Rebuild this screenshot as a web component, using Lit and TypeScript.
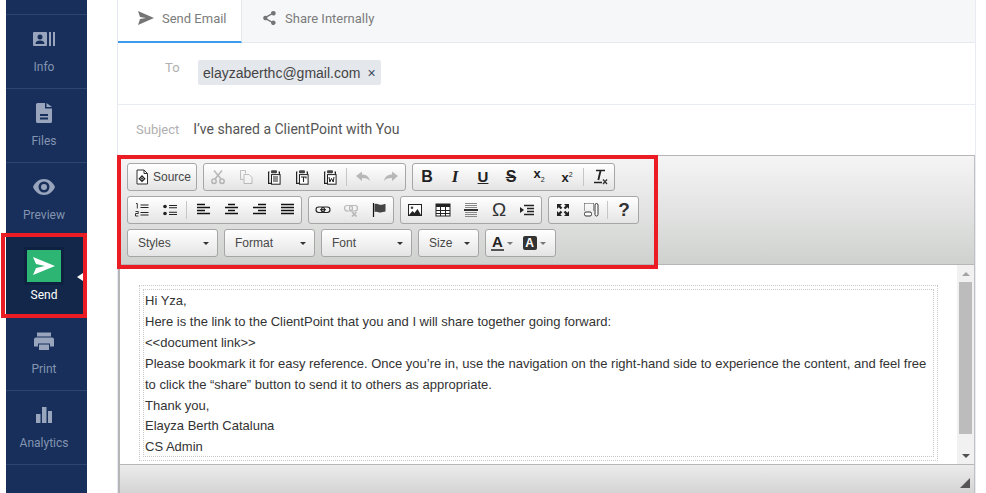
import { LitElement, html, css, svg } from "lit";
import { customElement } from "lit/decorators.js";

const ic = (body: unknown, dim = false) => html`<svg class="ic ${dim ? "dim" : ""}" viewBox="0 0 16 16">${body}</svg>`;
const clip = (inner: unknown) => svg`
  <path d="M3.5 3H2.6v11.4h3" fill="none" stroke="#222" stroke-width="1.2"/>
  <path d="M12.5 3h.9v3" fill="none" stroke="#222" stroke-width="1.2"/>
  <rect x="5" y="1.2" width="6" height="3" rx="1" fill="#444"/>
  <rect x="5.5" y="5.6" width="8.6" height="9.6" fill="#fff" stroke="#222"/>${inner}`;

const I = {
  source: ic(svg`<path d="M3 1h7l3.5 3.5V15H3z" fill="#fff" stroke="#333"/><path d="M10 1v3.5h3.5" fill="none" stroke="#333"/><path d="M8 7 5.300 9.700 8 12.400l2.700-2.700z" fill="#fff" stroke="#222" stroke-width="1.300"/><circle cx="8" cy="9.700" r=".9" fill="#222"/>`),
  cut: ic(svg`<path d="M4 1.5 11 10M12 1.5 5 10" stroke="#333" stroke-width="1.6"/><circle cx="4" cy="12.3" r="2.2" fill="none" stroke="#333" stroke-width="1.5"/><circle cx="12" cy="12.3" r="2.2" fill="none" stroke="#333" stroke-width="1.5"/>`, true),
  copy: ic(svg`<path d="M2.5 1.5h5v3M2.5 1.5v9h3" fill="none" stroke="#444"/><path d="M6 5.5h5l3 3v6H6z" fill="#fff" stroke="#444"/>`, true),
  paste: ic(clip(svg`<path d="M7 8h5M7 10h5M7 12h5" stroke="#222"/>`)),
  pastet: ic(clip(svg`<path d="M7 8h5v1.4M9.5 8v5" fill="none" stroke="#222" stroke-width="1.1"/>`)),
  pastew: ic(clip(svg`<path d="M7 8l.8 5 1.7-3.6 1.7 3.6.8-5" fill="none" stroke="#222"/>`)),
  undo: ic(svg`<path d="M1 7 7 2.5v3c4 0 7 2 8 6.5-2-2.4-4.400-3-8-3v3z" fill="#333"/>`, true),
  redo: ic(svg`<path d="M15 7 9 2.500v3c-4 0-7 2-8 6.500 2-2.400 4.400-3 8-3v3z" fill="#333"/>`, true),
  ol: ic(svg`<path d="M6.500 3h8M6.500 5.500h8M6.500 10.500h8M6.500 13h8" stroke="#222" stroke-width="1.100"/><path d="M2 1.500h1.300v5M1.500 9.500h2.800v2h-2.800v2.500h2.800" fill="none" stroke="#222" stroke-width=".9"/>`),
  ul: ic(svg`<path d="M7 3.500h8M7 5.800h8M7 10.200h8M7 12.500h8" stroke="#222" stroke-width="1.100"/><circle cx="3" cy="4.500" r="1.800" fill="#222"/><circle cx="3" cy="11.500" r="1.800" fill="#222"/>`),
  left: ic(svg`<path d="M2 2.500h8M2 5.500h13M2 8.500h8M2 11.500h13" stroke="#111" stroke-width="1.700"/>`),
  center: ic(svg`<path d="M5 2.500h7M2 5.500h13M5 8.500h7M2 11.500h13" stroke="#111" stroke-width="1.700"/>`),
  right: ic(svg`<path d="M7 2.500h8M2 5.500h13M7 8.500h8M2 11.500h13" stroke="#111" stroke-width="1.700"/>`),
  justify: ic(svg`<path d="M2 2.500h13M2 5.500h13M2 8.500h13M2 11.500h13" stroke="#111" stroke-width="1.700"/>`),
  link: ic(svg`<rect x="1" y="5" width="8.500" height="5.500" rx="2.700" fill="none" stroke="#222" stroke-width="1.100"/><rect x="6.500" y="5" width="8.500" height="5.500" rx="2.700" fill="none" stroke="#222" stroke-width="1.100"/><path d="M5 7.700h6" stroke="#222" stroke-width="1.100"/>`),
  unlink: ic(svg`<rect x="1.500" y="3.500" width="8" height="5.500" rx="2.700" fill="none" stroke="#333" stroke-width="1.200"/><rect x="6.500" y="3.500" width="8" height="5.500" rx="2.700" fill="none" stroke="#333" stroke-width="1.200"/><path d="M9 10l4.500 4.500M13.500 10 9 14.500" stroke="#333" stroke-width="1.500"/>`, true),
  flag: ic(svg`<path d="M2.500 1v14" stroke="#111" stroke-width="1.200"/><path d="M3.500 2c3-1 4 .8 6 .8 2 0 3.500-.8 5-.8v7.500c-2 0-3 1-5 1-2 0-3-1.500-6-.5z" fill="#444"/>`),
  image: ic(svg`<rect x="1.500" y="2.500" width="13" height="11" fill="#fff" stroke="#222"/><path d="M2 13l3.500-4 2 2 3-4 3.500 6z" fill="#222"/><circle cx="5" cy="5.800" r="1.300" fill="#444"/>`),
  table: ic(svg`<rect x="1" y="2" width="14" height="12" fill="#fff" stroke="#222"/><rect x="1" y="2" width="14" height="3" fill="#222"/><path d="M1 8.500h14M1 11.500h14M5.500 5v9M10.500 5v9" stroke="#222"/>`),
  hr: ic(svg`<path d="M2 1.500h12M2 3.500h12M2 5.500h12M2 10.500h12M2 12.500h12M2 14.500h12" stroke="#888"/><path d="M1 8h14" stroke="#111" stroke-width="1.700"/>`),
  indent: ic(svg`<path d="M5 3.500h10M8 6.500h7M8 9.500h7M5 12.500h10" stroke="#222" stroke-width="1.600"/><path d="M1 5l4 3-4 3z" fill="#222"/>`),
  max: ic(svg`<path d="M2 2h5L5.300 3.700l2 2-1.600 1.600-2-2L2 7zM14 2v5l-1.700-1.700-2 2-1.600-1.600 2-2L9 2zM2 14V9l1.700 1.700 2-2 1.600 1.600-2 2L7 14zM14 14H9l1.700-1.700-2-2 1.600-1.600 2 2L14 9z" fill="#222"/>`),
  blocks: ic(svg`<path d="M1.500 1.500h9M1.500 1.500v8M10.500 1.500v8" fill="none" stroke="#444" stroke-dasharray="1 1"/><rect x="1.500" y="10" width="7" height="4" rx="1.500" fill="#fff" stroke="#333"/><rect x="12" y="1.500" width="3" height="12.500" rx="1.500" fill="#fff" stroke="#333"/>`),
  remove: ic(svg`<path d="M4 1.500h9" stroke="#222" stroke-width="1.500"/><path d="M8.500 2 6.300 11" stroke="#222" stroke-width="1.800"/><path d="M2 13.500h8" stroke="#222" stroke-width="1.500"/><path d="M11 10.500l4 4.500M15 10.500l-4 4.500" stroke="#333" stroke-width="1.300"/>`),
};

type Item = unknown | "|";
const rowA: Item[][] = [
  [I.cut, I.copy, I.paste, I.pastet, I.pastew, "|", I.undo, I.redo],
  [
    html`<b class="g b">B</b>`,
    html`<i class="g i">I</i>`,
    html`<span class="g u">U</span>`,
    html`<span class="g s">S</span>`,
    html`<span class="g x">x<sub>2</sub></span>`,
    html`<span class="g x">x<sup>2</sup></span>`,
    "|",
    I.remove,
  ],
];
const rowB: Item[][] = [
  [I.ol, I.ul, "|", I.left, I.center, I.right, I.justify],
  [I.link, I.unlink, I.flag],
  [I.image, I.table, I.hr, html`<span class="g om">Ω</span>`, I.indent],
  [I.max, I.blocks, "|", html`<span class="g q">?</span>`],
];

const paragraphs = [
  "Hi Yza,",
  "Here is the link to the ClientPoint that you and I will share together going forward:",
  "<<document link>>",
  "Please bookmark it for easy reference. Once you’re in, use the navigation on the right-hand side to experience the content, and feel free to click the “share” button to send it to others as appropriate.",
  "Thank you,",
  "Elayza Berth Cataluna",
  "CS Admin",
];

const nav = [
  { label: "Info", icon: svg`<path fill-rule="evenodd" d="M3 5h12a1 1 0 0 1 1 1v12a1 1 0 0 1-1 1H3a1 1 0 0 1-1-1V6a1 1 0 0 1 1-1zm6 2.500a2.500 2.500 0 1 0 0 5 2.500 2.500 0 0 0 0-5zM4.500 17h9c0-2.300-1.800-3.400-4.500-3.400S4.500 14.700 4.500 17z"/><rect x="18" y="5" width="2" height="14"/><rect x="22" y="5" width="2" height="14"/>` },
  { label: "Files", icon: svg`<path fill-rule="evenodd" d="M6.500 2H14v5.500h7v13a1.500 1.500 0 0 1-1.500 1.500h-13A1.500 1.500 0 0 1 5 20.500v-17A1.500 1.500 0 0 1 6.500 2zM9 13v2h8v-2zm0 3.500v2h8v-2z"/><path d="M15.500 2 21 6h-5.500z"/>` },
  { label: "Preview", icon: svg`<path fill-rule="evenodd" d="M13 4c5 0 9 3.500 11 8-2 4.500-6 8-11 8S4 16.500 2 12c2-4.500 6-8 11-8zm0 2.500a5.500 5.500 0 1 0 0 11 5.500 5.500 0 0 0 0-11zm0 2.500a3 3 0 1 1 0 6 3 3 0 0 1 0-6z"/>` },
];
const nav2 = [
  { label: "Print", icon: svg`<path fill-rule="evenodd" d="M6 3.500h14v4H6zM5 8.500h16a2 2 0 0 1 2 2v7h-4v-3H7v3H3v-7a2 2 0 0 1 2-2zM8 15.500h10V21H8z"/>` },
  { label: "Analytics", icon: svg`<rect x="5" y="11" width="4.500" height="9"/><rect x="11" y="4" width="4.500" height="16"/><rect x="17" y="8" width="4" height="12"/>` },
];

@customElement("app-root")
export class AppRoot extends LitElement {
  static styles = css`
    :host { display: block; width: 986px; height: 493px; overflow: hidden; background: #fff; position: relative; }
    .page { display: flex; height: 493px; font-family: Roboto, sans-serif; }
    .side { width: 81px; margin-left: 6px; background: #172f5a; flex: none; display: flex; flex-direction: column; }
    .side .top { height: 14px; border-bottom: 1px solid #2d4570; flex: none; }
    .nav { height: 74px; flex: none; box-sizing: border-box; border-bottom: 1px solid #2d4570; display: flex; flex-direction: column; align-items: center; padding: 12px 5px 0 0; color: #8494b1; font-size: 12px; }
    .nav svg { width: 26px; height: 24px; fill: #98a5bd; margin-bottom: 9px; flex: none; }
    .nav span { line-height: 14px; }
    .send { height: 80px; flex: none; background: #12274a; position: relative; display: flex; flex-direction: column; align-items: center; padding: 10px 5px 0 0; box-sizing: border-box; color: #fff; font-size: 12px; }
    .send span { line-height: 14px; }
    .send .box { width: 34px; height: 32px; background: #2db673; border: 3px solid #0f2140; border-radius: 3px; display: flex; align-items: center; justify-content: center; margin-bottom: 3px; }
    .send svg { width: 22px; height: 18px; }
    .send .tip { position: absolute; right: 4px; top: 36px; width: 0; height: 0; border: 4px solid transparent; border-left-width: 0; border-right: 6px solid #fff; }
    .main { width: 859px; margin-left: 30px; flex: none; display: flex; flex-direction: column; border-left: 1px solid #e4e8f0; box-sizing: border-box; border-right: 1px solid #e8ebf2; }
    .tabs { display: flex; height: 43px; flex: none; background: #f6f7f9; border-bottom: 1px solid #e6e9f0; box-sizing: border-box; color: #7c7c7c; font-size: 13px; }
    .tab { display: flex; align-items: center; gap: 7px; padding-bottom: 6px; box-sizing: border-box; }
    .tab.on { width: 124px; background: #fff; border-bottom: 2px solid #3d9be9; margin-bottom: -1px; padding-left: 20px; padding-bottom: 5px; border-right: 1px solid #e6e9f0; }
    .tab.off { padding-left: 19px; }
    .tab svg { width: 17px; height: 16px; fill: #757575; }
    .row { display: flex; flex: none; border-bottom: 1px solid #e9ecf2; box-sizing: border-box; }
    .to { height: 62px; padding: 18px 0 0 47px; gap: 19px; }
    .lab { color: #b0b0b0; font-size: 13px; line-height: 14px; }
    .to .lab { width: 14px; }
    .chip { height: 25px; margin-top: -1px; background: #e4e7ec; border-radius: 2px; display: flex; align-items: center; padding: 0 5px; gap: 7px; color: #444; font: 14px "Liberation Sans", sans-serif; }
    .chip i { font-style: normal; font-size: 14px; color: #3c4b5e; }
    .subj { height: 50px; border-bottom: none; padding: 16px 0 0 18px; gap: 14px; color: #555; font-size: 14px; line-height: 16px; }
    .subj .lab { margin-top: 2px; }
    .ed { flex: 1; min-height: 0; border: 1px solid #b6b6b6; border-left-width: 2px; border-bottom: none; border-right-color: #c0c0c0; display: flex; flex-direction: column; font-family: "Liberation Sans", Arial, sans-serif; }
    .bar { height: 109px; flex: none; box-sizing: border-box; padding: 7px 0 0 7px; background: linear-gradient(#f5f5f5, #cfd1cf); border-bottom: 1px solid #b6b6b6; display: flex; flex-direction: column; gap: 5px; }
    .tr { display: flex; gap: 6px; height: 28px; }
    .grp { display: flex; align-items: center; height: 28px; box-sizing: border-box; border: 1px solid #a6a6a6; border-radius: 3px; background: linear-gradient(#fff, #e4e4e4); color: #474747; font-size: 12px; }
    .btn { width: 28px; height: 26px; display: flex; align-items: center; justify-content: center; flex: none; color: #222; }
    .sep { width: 5px; flex: none; display: flex; justify-content: center; }
    .sep::before { content: ""; width: 1px; height: 18px; background: #c6c6c6; }
    .ic { width: 16px; height: 16px; display: block; }
    .dim { opacity: .3; }
    .g { font-family: "Liberation Sans", sans-serif; line-height: 16px; color: #222; font-size: 15px; }
    .b { font-weight: 700; font-size: 16px; }
    .i { font-family: "Liberation Serif", serif; font-weight: 700; font-size: 17px; }
    .u { text-decoration: underline; font-weight: 700; }
    .s { text-decoration: line-through; font-weight: 700; font-size: 16px; }
    .x { font-weight: 700; font-size: 13px; }
    .x sub, .x sup { font-size: 7px; font-weight: 400; }
    .om { font-size: 19px; font-weight: 400; color: #333; }
    .q { font-weight: 700; font-size: 19px; color: #333; }
    .src { width: 70px; padding-left: 6px; gap: 3px; }
    .combo { justify-content: space-between; padding: 0 8px 0 10px; }
    .caret { width: 0; height: 0; border: 3px solid transparent; border-top-color: #333; border-bottom-width: 0; }
    .w91 { width: 91px; } .w61 { width: 61px; } .w71 { width: 71px; }
    .col { width: 32px; display: flex; align-items: center; justify-content: center; gap: 3px; }
    .col .caret { border-top-color: #777; }
    .tA { font: 700 15px "Liberation Sans", sans-serif; color: #222; border-bottom: 2px solid #555; line-height: 14px; padding: 0 1px; }
    .bA { font: 700 12px/14px "Liberation Sans", sans-serif; color: #fff; background: #333; width: 14px; text-align: center; border-radius: 2px; }
    .body { flex: 1; min-height: 0; display: flex; background: #fff; }
    .doc { flex: 1; padding: 20px 19px 0 19px; min-width: 0; }
    .f1 { border: 1px dotted #c8c8c8; padding: 3px; height: 176px; box-sizing: border-box; }
    .f2 { border: 1px dotted #c8c8c8; height: 100%; box-sizing: border-box; padding: 1px 2px 0 1px; color: #333; font-size: 13px; line-height: 20.9px; }
    .f2 p { margin: 0; }
    .sb { width: 17px; flex: none; background: #f1f1f1; display: flex; flex-direction: column; align-items: center; }
    .sb .up, .sb .dn { height: 17px; flex: none; display: flex; align-items: center; justify-content: center; }
    .sb .up::before { content: ""; border: 4px solid transparent; border-top-width: 0; border-bottom: 4px solid #a3a3a3; }
    .sb .dn::before { content: ""; border: 4px solid transparent; border-bottom-width: 0; border-top: 4px solid #505050; }
    .thumb { width: 13px; height: 152px; background: #bcbcbc; flex: none; }
    .gap { flex: 1; }
    .foot { height: 29px; flex: none; border-top: 1px solid #b6b6b6; background: linear-gradient(#ebebeb, #d4d4d4); display: flex; justify-content: flex-end; align-items: flex-end; padding: 0 4px 5px 0; box-sizing: border-box; }
    .grip { width: 0; height: 0; border-left: 10px solid transparent; border-bottom: 10px solid #555; }
    .hl { position: absolute; border: 4px solid #ec1c24; box-sizing: border-box; pointer-events: none; }
    .h1 { left: 1px; top: 233px; width: 86px; height: 85px; }
    .h2 { left: 117px; top: 155px; width: 541px; height: 114px; }
  `;

  private group(items: Item[]) {
    return html`<div class="grp">${items.map((it) =>
      it === "|" ? html`<div class="sep"></div>` : html`<div class="btn">${it}</div>`
    )}</div>`;
  }

  private navItem(n: { label: string; icon: unknown }) {
    return html`<div class="nav"><svg viewBox="0 0 26 24">${n.icon}</svg><span>${n.label}</span></div>`;
  }

  render() {
    return html`
      <div class="page">
        <div class="side">
          <div class="top"></div>
          ${nav.map((n) => this.navItem(n))}
          <div class="send">
            <div class="box"><svg viewBox="0 0 22 18"><path d="M0 0l22 9L0 18l3-7 9-2-9-2z" fill="#fff"/></svg></div>
            <span>Send</span><div class="tip"></div>
          </div>
          ${nav2.map((n) => this.navItem(n))}
        </div>
        <div class="main">
          <div class="tabs">
            <div class="tab on"><svg viewBox="0 0 17 16"><path d="M0 1l16 7L0 15l2-6 6-1-6-1z"/></svg>Send Email</div>
            <div class="tab off"><svg viewBox="0 0 17 16"><path d="M12.500 1a2.300 2.300 0 1 1-1.800 3.800L6.300 7.200a2.300 2.300 0 0 1 0 1.600l4.400 2.400a2.300 2.300 0 1 1-.6 1.200L5.600 10a2.300 2.300 0 1 1 0-4l4.500-2.400A2.300 2.300 0 0 1 12.500 1z"/></svg>Share Internally</div>
          </div>
          <div class="row to"><span class="lab">To</span><div class="chip">elayzaberthc@gmail.com <i>×</i></div></div>
          <div class="row subj"><span class="lab">Subject</span><span>I’ve shared a ClientPoint with You</span></div>
          <div class="ed">
            <div class="bar">
              <div class="tr">
                <div class="grp src">${I.source}<span>Source</span></div>
                ${rowA.map((g) => this.group(g))}
              </div>
              <div class="tr">${rowB.map((g) => this.group(g))}</div>
              <div class="tr">
                <div class="grp combo w91"><span>Styles</span><i class="caret"></i></div>
                <div class="grp combo w91"><span>Format</span><i class="caret"></i></div>
                <div class="grp combo w91"><span>Font</span><i class="caret"></i></div>
                <div class="grp combo w61"><span>Size</span><i class="caret"></i></div>
                <div class="grp w71">
                  <div class="col"><span class="tA">A</span><i class="caret"></i></div>
                  <div class="col"><span class="bA">A</span><i class="caret"></i></div>
                </div>
              </div>
            </div>
            <div class="body">
              <div class="doc"><div class="f1"><div class="f2">${paragraphs.map((p) => html`<p>${p}</p>`)}</div></div></div>
              <div class="sb"><div class="up"></div><div class="thumb"></div><div class="gap"></div><div class="dn"></div></div>
            </div>
            <div class="foot"><div class="grip"></div></div>
          </div>
        </div>
      </div>
      <div class="hl h1"></div>
      <div class="hl h2"></div>
    `;
  }
}
